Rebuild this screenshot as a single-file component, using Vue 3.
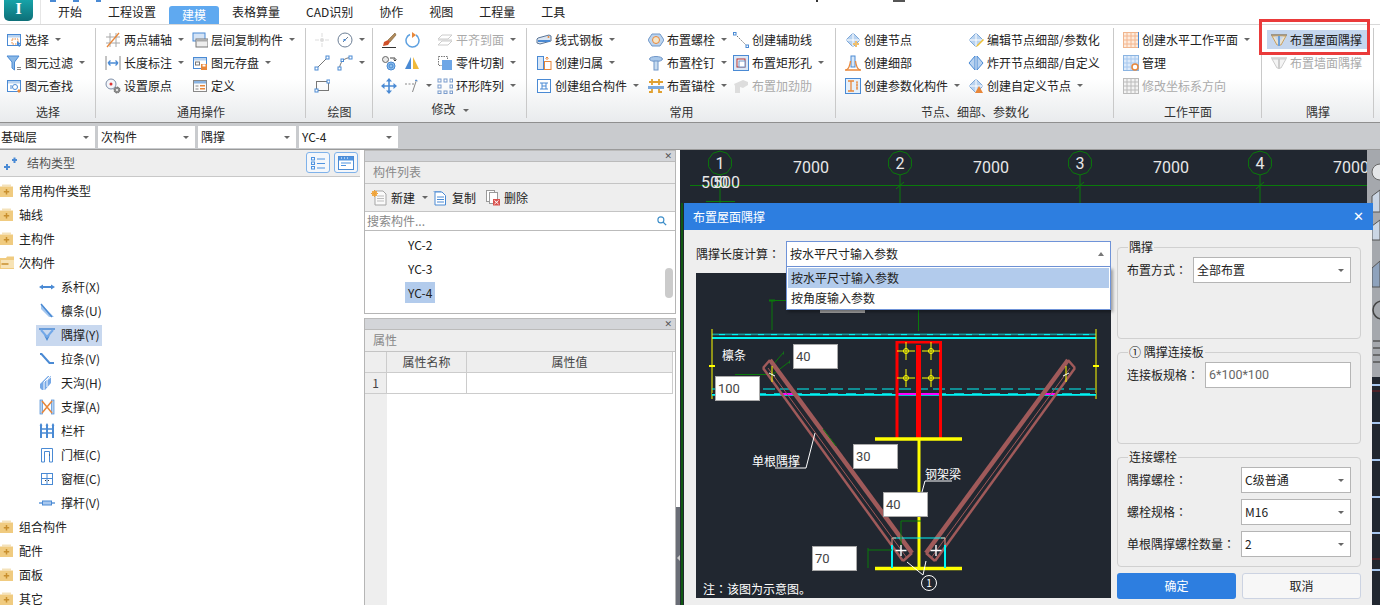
<script setup>
const B = '#4a8ad4', L = '#b9d3f0', O = '#e8873a', G = '#9a9a9a'
const win = (extra = '') => `<rect x="1.5" y="2.5" width="13" height="11" fill="#fff" stroke="${B}"/><rect x="2" y="3" width="12" height="2.5" fill="${L}"/>${extra}`
const diamond = (extra = '') => `<path d="M8 1 15 8 8 15 1 8Z" fill="${L}" stroke="#7ea8d8"/><path d="M8 1V15M1 8H15" stroke="#fff"/>${extra}`
const icons = {
  sel: win(`<rect x="6" y="7" width="6" height="5" fill="none" stroke="${O}" stroke-dasharray="1.5 1"/><path d="M11 9l4 3-2 .5 1 2-1 .5-1-2-1 1z" fill="${B}"/>`),
  filter: `<path d="M1 1H13L8.5 7V15L6 13V7Z" fill="#8ab8e6" stroke="${B}"/><path d="M11 12.5h4M11 14.5h4" stroke="#888"/>`,
  find: win(`<circle cx="9" cy="9" r="2.5" fill="none" stroke="${B}"/><path d="M4 8h2M4 10h2" stroke="${B}"/><path d="M13 11l2 2-2 2-2-2z" fill="${O}"/>`),
  axis: `<path d="M1 5H15M1 11H15M5 1V15M11 1V15" stroke="#a8a8a8"/><path d="M2 15 14 1" stroke="${O}" stroke-width="1.3"/>`,
  dim: `<path d="M1 1V15M15 1V15" stroke="#888"/><path d="M3 8H13M3 8l2.500-2.500M3 8l2.500 2.500M13 8l-2.500-2.500M13 8l-2.500 2.500" stroke="${B}" stroke-width="1.3" fill="none"/>`,
  origin: `<circle cx="6" cy="6" r="5" fill="#f4f6fa" stroke="#7d8ea8"/><circle cx="6" cy="6" r="1.500" fill="#d33"/><circle cx="12" cy="12" r="3" fill="#8c8c8c" stroke="#666" stroke-dasharray="1.500 .8"/><circle cx="12" cy="12" r="1" fill="#fff"/>`,
  layercopy: `<rect x="1" y="1" width="12" height="8" fill="#d5e4f6" stroke="${B}"/><rect x="4" y="7" width="12" height="8" fill="#eee" stroke="#777"/><rect x="4.500" y="7.500" width="11" height="2" fill="#aaa"/>`,
  store: win(`<rect x="3.500" y="7" width="4" height="3" fill="none" stroke="#777"/><rect x="9" y="9" width="6" height="6" fill="${O}"/><rect x="10.500" y="9.500" width="3" height="2" fill="#fff"/>`),
  define: `<rect x="1.500" y="2.500" width="13" height="11" fill="#fbfbfb" stroke="#888"/><rect x="2" y="3" width="12" height="2.500" fill="#8ab4e2"/><path d="M3.500 8h3M3.500 11h3" stroke="#888"/><rect x="8" y="7" width="5" height="1.500" fill="${O}"/><rect x="8" y="10" width="5" height="1.500" fill="${O}"/>`,
  pt: `<circle cx="8" cy="8" r="2" fill="#ddd"/><path d="M1 8H5M11 8H15M8 1V5M8 11V15" stroke="#ddd"/>`,
  circ: `<circle cx="8" cy="8" r="7" fill="none" stroke="#6d7f96"/><path d="M6 10 11 5" stroke="#6d7f96"/><rect x="6.500" y="7" width="2" height="2" fill="${B}"/>`,
  line: `<path d="M2.500 13.500 13.500 2.500" stroke="#777"/><rect x="1" y="12" width="3" height="3" fill="#fff" stroke="${B}"/><rect x="12" y="1" width="3" height="3" fill="#fff" stroke="${B}"/>`,
  arc: `<path d="M2.500 13.500C3 7 7 3 13.500 2.500" stroke="#777" fill="none"/><rect x="1" y="12" width="3" height="3" fill="#fff" stroke="${B}"/><rect x="12" y="1" width="3" height="3" fill="#fff" stroke="${B}"/><rect x="4" y="4" width="2.500" height="2.500" fill="#fff" stroke="${B}"/>`,
  rect: `<rect x="2.500" y="3.500" width="12" height="9" fill="none" stroke="#777"/><rect x="1" y="11" width="3" height="3" fill="#fff" stroke="${B}"/><rect x="13" y="2" width="3" height="3" fill="#fff" stroke="${B}"/>`,
  brush: `<path d="M14 1 7 8l2 2 6-7z" fill="#b08a5a" stroke="#7a5a30" stroke-width=".6"/><path d="M7 8 3 10l-1 4 5-1 2-3z" fill="#d0512a"/><path d="M1 15.500H15" stroke="#333"/>`,
  rotate: `<path d="M6 2.500A6.500 6.500 0 1 0 12 3" fill="none" stroke="#5da0e0" stroke-width="1.500"/><path d="M8 0l4 3-4 3z" fill="${O}"/>`,
  mcopy: `<circle cx="4.500" cy="4.500" r="3" fill="#e8e8e8" stroke="#666"/><circle cx="10" cy="11" r="4" fill="#8fc0ec" stroke="${B}"/><circle cx="10" cy="11" r="2" fill="none" stroke="${B}"/><path d="M9 3h5v3M12.500 4.500 14 6l1.500-1.500" stroke="#444" fill="none"/>`,
  mirror: `<path d="M7 2V14H1Z" fill="${B}"/><path d="M9 2V14H15Z" fill="#f0b93a"/>`,
  move: `<path d="M8 1V15M1 8H15" stroke="${B}" stroke-width="1.600"/><path d="M8 0l3 3.500H5zM8 16l3-3.500H5zM0 8l3.500 3V5zM16 8l-3.500 3V5z" fill="${B}"/>`,
  extend: `<path d="M1 6h2M4.500 6h2M8 6h2M12.500 2 8.500 14" stroke="#888"/><path d="M11 2.500 12.500 2l.8 1.300" stroke="${B}" fill="none"/>`,
  align: `<path d="M5 3H15L11 7H1ZM5 9H15L11 13H1Z" fill="none" stroke="#ccc"/><path d="M1 8H15" stroke="#ccc"/>`,
  cut: `<rect x="1.500" y="1.500" width="9" height="9" fill="none" stroke="#777" stroke-dasharray="1.500 1"/><rect x="5" y="5" width="10" height="10" fill="#6ea6e6"/>`,
  array: `<g fill="none" stroke="#7a9ccc"><rect x="1" y="1" width="3" height="3"/><rect x="7" y="1" width="3" height="3"/><rect x="13" y="1" width="2.500" height="3"/><rect x="1" y="7" width="3" height="3"/><rect x="13" y="7" width="2.500" height="3"/><rect x="1" y="13" width="3" height="2.500"/><rect x="7" y="13" width="3" height="2.500"/><rect x="13" y="13" width="2.500" height="2.500"/></g>`,
  plate: `<path d="M2 6 13 3l2 1v5L4 12 1 11V7Z" fill="#dbe6f3" stroke="#5b7596"/><rect x="2" y="8" width="12" height="2" fill="${B}"/><circle cx="12.500" cy="5" r="1" fill="${O}"/>`,
  tail: `<rect x="1.500" y="1.500" width="6" height="13" fill="#d8e7f8" stroke="${B}"/><rect x="8.500" y="6.500" width="6.500" height="8" fill="#fff" stroke="${O}"/><path d="M11 5V2M9.500 3.500 11 2l1.500 1.500" stroke="${O}" fill="none"/>`,
  combo: `<rect x="1.500" y="1.500" width="13" height="13" fill="#fff" stroke="${B}"/><path d="M4 5h8M4 11h8M6 5v6M10 5v6M6 8h4" stroke="${B}"/>`,
  bolt: `<path d="M4 2h8l4 6-4 6H4L0 8Z" fill="#bcd4ee" stroke="#6f96c8"/><circle cx="8" cy="8" r="3.500" fill="#f5e5c8" stroke="${O}"/>`,
  stud: `<ellipse cx="8" cy="4" rx="6.500" ry="2.500" fill="#a9c8ea" stroke="#6f96c8"/><rect x="6" y="6" width="4" height="9" fill="#c8dcf0" stroke="#6f96c8"/>`,
  anchor: `<path d="M4 1V7M11 1V7M1 4H15" stroke="#e0a030" stroke-width="1.800" fill="none"/><path d="M0 8H16V11H0Z" fill="#7aa8dc"/><path d="M4 11v3h-3M11 11v3h3" stroke="#e0a030" stroke-width="1.800" fill="none"/>`,
  aux: `<path d="M2 2 14 14" stroke="#666" stroke-dasharray="1.500 1.500"/><rect x="0.500" y="0.500" width="2.500" height="2.500" fill="#fff" stroke="${B}"/><rect x="13" y="13" width="2.500" height="2.500" fill="#fff" stroke="${B}"/>`,
  hole: `<rect x=".5" y=".5" width="15" height="15" fill="#dce8f6" stroke="${B}"/><rect x="4" y="4" width="8" height="8" fill="#fff" stroke="#b03030"/><rect x="6" y="6" width="6" height="6" fill="#fff" stroke="#6f96c8"/>`,
  stiff: `<path d="M1 6 10 2l5 2v3l-5 3-3-1v6H2V8Z" fill="#ddd"/>`,
  node: diamond(`<path d="M11 9v6M8 12h6" stroke="#f0c070" stroke-width="2"/>`),
  detail: `<rect x="6" y="1" width="4" height="11" fill="#d7e7f8" stroke="${B}"/><path d="M1 15C4 14 5 10 5.500 6M15 15C12 14 11 10 10.500 6" stroke="${O}" fill="none" stroke-width="1.300"/><path d="M0 15H16" stroke="${O}" stroke-width="1.500"/>`,
  param: `<rect x=".5" y=".5" width="15" height="15" fill="#e5f0fb" stroke="${B}"/><path d="M3 3h6M3 13h6M6 3v10" stroke="${O}" stroke-width="1.300"/><path d="M11 4h2M11 7h2M11 10h2M12 4v8" stroke="${O}"/>`,
  nedit: diamond(`<path d="M15 7 9 13l-1 2 2-1 6-6z" fill="#f0c030"/>`),
  nexp: `<path d="M7 1V15L1 8ZM9 1V15L15 8Z" fill="${L}" stroke="${B}"/>`,
  ncus: diamond(`<path d="M11 8l4 7H7z" fill="${O}"/>`),
  plane: `<rect x=".5" y=".5" width="15" height="15" fill="#fdebdc" stroke="#f0b68e"/><path d="M4 1V15M8 1V15M12 1V15M1 4H15M1 8H15M1 12H15" stroke="#f4b690"/><path d="M15.500 0V16" stroke="${B}"/>`,
  manage: `<rect x=".5" y=".5" width="15" height="15" fill="#dceafa" stroke="#8ab4e2"/><path d="M4 1V15M8 1V15M12 1V15M1 4H15M1 8H15M1 12H15" stroke="#a8c8ee"/><circle cx="12" cy="12" r="3" fill="#fff" stroke="${O}" stroke-width="1.500"/>`,
  coord: `<rect x=".5" y=".5" width="15" height="15" fill="#f3f3f3" stroke="#bbb"/><path d="M4 1V15M8 1V15M12 1V15M1 4H15M1 8H15M1 12H15" stroke="#bbb"/>`,
  brace: `<path d="M0 3H16" stroke="#8a7a60" stroke-width="1.400"/><path d="M1 4 6 13H10L15 4Z" fill="#e8e2d2" stroke="#c9a060"/><path d="M3.500 4.500H12.500L9 9H7Z" fill="#c5d6ee"/><rect x="7" y="4" width="2" height="10" fill="#6ea0d8"/>`,
  wbrace: `<path d="M0 3H16" stroke="#ccc" stroke-width="1.400"/><path d="M1 4 6 13H10L15 4Z" fill="#f4f4f4" stroke="#ccc"/><rect x="7" y="4" width="2" height="10" fill="#ccc"/>`,
  fplus: `<path d="M2 1.500h9v2H2z" fill="#f4e2bb"/><path d="M0 3.500H13V14H0Z" fill="#f0cb80"/><path d="M6.500 6v5.500M3.800 8.700h5.400" stroke="#c88f2e" stroke-width="1.500"/>`,
  fminus: `<path d="M0 3H6L7 1.500H14V14H0Z" fill="#f0cb80"/><path d="M1 5H14V13H1Z" fill="#f7e3b6"/><path d="M1.500 9h7" stroke="#c88f2e" stroke-width="1.500"/>`,
  tie: `<path d="M3 8H13" stroke="${B}" stroke-width="2"/><path d="M0 8l4-2.500v5zM16 8l-4-2.500v5z" fill="${B}"/>`,
  purlin: `<path d="M2 1 15 14H10L2 6Z" fill="#a3c6ee"/><path d="M2 1 13 14" stroke="${B}" stroke-width="1.500"/>`,
  ybrace: `<path d="M0 2H16" stroke="${B}" stroke-width="1.500"/><path d="M2 3 8 10 14 3" stroke="#72a8e8" stroke-width="2" fill="none"/><path d="M5 8 8 11 11 8 8 14Z" fill="${B}"/>`,
  strip: `<path d="M1 2h2l8 9h4v2H10L2 4H1Z" fill="${B}"/>`,
  gutter: `<path d="M1 9 9 1h3v7l-6 7H3L1 13Z" fill="#76a8e6"/><path d="M5 15V7l6-6M8 12V5l5-4v7" stroke="#fff" fill="none"/>`,
  xbrace: `<rect x="1" y="1" width="2.500" height="14" fill="${L}" stroke="${B}" stroke-width=".7"/><rect x="12.500" y="1" width="2.500" height="14" fill="${L}" stroke="${B}" stroke-width=".7"/><path d="M3 2 13 14M13 2 3 14" stroke="${O}" stroke-width="1.500"/>`,
  rail: `<path d="M2 2V15M8 2V15M14 2V15" stroke="${B}" stroke-width="2"/><path d="M1 6H15M1 10H15" stroke="${B}" stroke-width="1.300"/><path d="M2 0l1.500 2.500h-3zM8 0l1.500 2.500h-3zM14 0l1.500 2.500h-3z" fill="${B}"/>`,
  door: `<path d="M2.500 15V1.500H13.500V15H10.500V4.500H5.500V15Z" fill="#fff" stroke="${B}"/><path d="M10 8h1" stroke="#444"/>`,
  window: `<rect x="2.500" y="2.500" width="11" height="11" fill="#fff" stroke="${B}"/><path d="M8 2.500V13.500M2.500 7.500H13.500" stroke="${B}"/><path d="M6.500 9v1M9.500 9v1" stroke="#333"/>`,
  strut: `<path d="M0 8H16" stroke="${B}" stroke-width="1.300"/><rect x="3.500" y="6" width="9" height="4" fill="#a9c8ee" stroke="${B}"/>`,
  stars: `<path d="M2 12H8M5 9V15M10 5H15M12.500 2.500V8" stroke="${B}" stroke-width="2"/>`,
  listb: `<g fill="none" stroke="#4f93e0"><rect x="1.500" y="2.500" width="3" height="2.500"/><rect x="1.500" y="7" width="3" height="2.500"/><rect x="1.500" y="11.500" width="3" height="2.500"/><path d="M7 4H15M7 8.500H15M7 13H15"/></g>`,
  winb: `<rect x=".5" y="1.500" width="15" height="13" fill="#fff" stroke="${B}"/><rect x="1" y="2" width="14" height="3.500" fill="#4f93e0"/><path d="M3 3h1M6 3h1M9 3h1" stroke="#fff"/><path d="M3 8h10M3 10.500h5" stroke="#4f93e0" stroke-width="1.200"/>`,
  newd: `<path d="M4 1H12L15 4V15H4Z" fill="#fafafa" stroke="#a5a5a5"/><path d="M6 6h7M6 8.500h7M6 11h7" stroke="#bdbdbd"/><rect x="1" y="1" width="5" height="5" fill="#f0a030" opacity=".85"/><path d="M3.500 0V7M0 3.500H7" stroke="#f0a030" stroke-dasharray="1 1"/>`,
  copyd: `<path d="M1.500 1.500H9" stroke="#8ab0de" fill="none"/><path d="M3 2H10L13.500 5.500V15H3Z" fill="#fff" stroke="${B}"/><path d="M5 7h7M5 9.500h7M5 12h7" stroke="${B}"/>`,
  deld: `<rect x="1.500" y=".5" width="8" height="11" fill="#fff" stroke="#9a9a9a"/><rect x="4.500" y="2.500" width="8" height="11" fill="#fff" stroke="#9a9a9a"/><rect x="8" y="9" width="7" height="6.500" fill="#d9534f"/><path d="M9.500 10.500l4 3.500M13.500 10.500l-4 3.500" stroke="#fff"/>`,
  search: `<circle cx="6.500" cy="6.500" r="4" fill="none" stroke="#3d8ec9" stroke-width="1.500"/><path d="M9.500 9.500l4 4" stroke="#3d8ec9" stroke-width="1.800"/>`
}

const bits = [[50, 6, '#4a8ad4'], [73, 6, '#4a8ad4'], [96, 5, '#4a8ad4'], [816, 2, '#333'], [893, 12, '#555']]
const tabs = ['开始', '工程设置', '建模', '表格算量', 'CAD识别', '协作', '视图', '工程量', '工具']

const groups = [
  { name: '选择', w: 96, pad: 6, cols: [{ items: [
    { ic: 'sel', t: '选择', c: 1 }, { ic: 'filter', t: '图元过滤', c: 1 }, { ic: 'find', t: '图元查找' }] }] },
  { name: '通用操作', w: 210, pad: 9, cols: [
    { w: 87, items: [{ ic: 'axis', t: '两点辅轴', c: 1 }, { ic: 'dim', t: '长度标注', c: 1 }, { ic: 'origin', t: '设置原点' }] },
    { items: [{ ic: 'layercopy', t: '层间复制构件', c: 1 }, { ic: 'store', t: '图元存盘', c: 1 }, { ic: 'define', t: '定义' }] }] },
  { name: '绘图', w: 67, pad: 8, cols: [
    { w: 23, items: [{ ic: 'pt' }, { ic: 'line' }, { ic: 'rect' }] },
    { items: [{ ic: 'circ', c: 1 }, { ic: 'arc', c: 1 }] }] },
  { name: '修改', w: 154, pad: 8, nameCaret: 1, cols: [
    { w: 23, items: [{ ic: 'brush' }, { ic: 'mcopy' }, { ic: 'move' }] },
    { w: 33, items: [{ ic: 'rotate' }, { ic: 'mirror' }, { ic: 'extend', c: 1 }] },
    { items: [{ ic: 'align', t: '平齐到面', c: 1, off: 1 }, { ic: 'cut', t: '零件切割', c: 1 }, { ic: 'array', t: '环形阵列', c: 1 }] }] },
  { name: '常用', w: 309, pad: 9, cols: [
    { w: 112, items: [{ ic: 'plate', t: '线式钢板', c: 1 }, { ic: 'tail', t: '创建归属', c: 1 }, { ic: 'combo', t: '创建组合构件', c: 1 }] },
    { w: 85, items: [{ ic: 'bolt', t: '布置螺栓', c: 1 }, { ic: 'stud', t: '布置栓钉', c: 1 }, { ic: 'anchor', t: '布置锚栓', c: 1 }] },
    { items: [{ ic: 'aux', t: '创建辅助线' }, { ic: 'hole', t: '布置矩形孔', c: 1 }, { ic: 'stiff', t: '布置加劲肋', off: 1 }] }] },
  { name: '节点、细部、参数化', w: 278, pad: 9, cols: [
    { w: 123, items: [{ ic: 'node', t: '创建节点' }, { ic: 'detail', t: '创建细部' }, { ic: 'param', t: '创建参数化构件', c: 1 }] },
    { items: [{ ic: 'nedit', t: '编辑节点细部/参数化' }, { ic: 'nexp', t: '炸开节点细部/自定义' }, { ic: 'ncus', t: '创建自定义节点', c: 1 }] }] },
  { name: '工作平面', w: 148, pad: 9, cols: [{ items: [
    { ic: 'plane', t: '创建水平工作平面', c: 1 }, { ic: 'manage', t: '管理' }, { ic: 'coord', t: '修改坐标系方向', off: 1 }] }] },
  { name: '隅撑', w: 112, pad: 5, cols: [{ items: [
    { ic: 'brace', t: '布置屋面隅撑', hi: 1 }, { ic: 'wbrace', t: '布置墙面隅撑', off: 1, ind: 1 }] }] }
]

const combos = [
  { t: '基础层', w: 95 }, { t: '次构件', w: 97 }, { t: '隅撑', w: 98 }, { t: 'YC-4', w: 99 }
]

const tree = [
  { t: '常用构件类型', ic: 'fplus' }, { t: '轴线', ic: 'fplus' }, { t: '主构件', ic: 'fplus' }, { t: '次构件', ic: 'fminus' },
  { t: '系杆(X)', ic: 'tie', sub: 1 }, { t: '檩条(U)', ic: 'purlin', sub: 1 }, { t: '隅撑(Y)', ic: 'ybrace', sub: 1, on: 1 },
  { t: '拉条(V)', ic: 'strip', sub: 1 }, { t: '天沟(H)', ic: 'gutter', sub: 1 }, { t: '支撑(A)', ic: 'xbrace', sub: 1 },
  { t: '栏杆', ic: 'rail', sub: 1 }, { t: '门框(C)', ic: 'door', sub: 1 }, { t: '窗框(C)', ic: 'window', sub: 1 }, { t: '撑杆(V)', ic: 'strut', sub: 1 },
  { t: '组合构件', ic: 'fplus' }, { t: '配件', ic: 'fplus' }, { t: '面板', ic: 'fplus' }, { t: '其它', ic: 'fplus' }
]

const axes = [{ x: 720, n: 1 }, { x: 900, n: 2 }, { x: 1080, n: 3 }, { x: 1260, n: 4 }]
const spans = [811, 991, 1171, 1351]
const railTicks = [235, 273, 310, 347, 383, 420]
const octagon = (x, y, r) => {
  const pts = []
  for (let i = 0; i < 10; i++) {
    const a = (Math.PI * 2 * i) / 10 + Math.PI / 10
    pts.push(`${(x + r * Math.cos(a)).toFixed(1)},${(y + r * Math.sin(a)).toFixed(1)}`)
  }
  return pts.join(' ')
}
const boltPts = [[906, 351], [931, 351], [906, 378], [931, 378]]
const inputs = [
  { t: '40', x: 97, y: 71 }, { t: '100', x: 19, y: 103 }, { t: '30', x: 157, y: 171 }, { t: '40', x: 187, y: 219 }, { t: '70', x: 116, y: 273 }
]
</script>

<template>
  <div class="app">
    <i v-for="b in bits" :key="b[0]" class="bit" :style="{ left: b[0] + 'px', width: b[1] + 'px', background: b[2] }"></i>

    <div class="tabs">
      <div class="logo-cell">
        <div class="logo"><span>I</span></div>
      </div>
      <div v-for="t in tabs" :key="t" class="tab" :class="{ active: t === '建模' }">{{ t }}</div>
    </div>

    <div class="ribbon">
      <div v-for="g in groups" :key="g.name" class="group" :style="{ width: g.w + 'px' }">
        <div class="g-body" :style="{ paddingLeft: g.pad + 'px' }">
          <div v-for="(c, ci) in g.cols" :key="ci" class="g-col" :style="c.w ? { width: c.w + 'px' } : null">
            <div v-for="(it, i) in c.items" :key="i" class="r-item" :class="{ off: it.off, hi: it.hi, ind: it.ind }">
              <svg class="ic" viewBox="0 0 16 16" v-html="icons[it.ic]"></svg>
              <span v-if="it.t" class="r-text">{{ it.t }}</span>
              <i v-if="it.c" class="caret"></i>
            </div>
          </div>
        </div>
        <div class="g-name" :class="{ raised: g.nameCaret }">{{ g.name }}<i v-if="g.nameCaret" class="caret"></i></div>
      </div>
    </div>
    <div class="mark"></div>

    <div class="combo-bar">
      <div v-for="c in combos" :key="c.t" class="combo" :style="{ width: c.w + 'px' }">
        <span>{{ c.t }}</span><i class="caret"></i>
      </div>
    </div>

    <div class="main">
      <aside class="left">
        <div class="left-head">
          <svg class="ic" viewBox="0 0 16 16" v-html="icons.stars"></svg>
          <span class="left-title">结构类型</span>
          <div class="hbtn active"><svg class="ic" viewBox="0 0 16 16" v-html="icons.listb"></svg></div>
          <div class="hbtn active"><svg class="ic" viewBox="0 0 16 16" v-html="icons.winb"></svg></div>
        </div>
        <div class="tree">
          <div v-for="n in tree" :key="n.t" class="t-row" :class="{ sub: n.sub }">
            <div class="t-in" :class="{ on: n.on }">
              <svg class="ic" :class="{ fold: !n.sub }" viewBox="0 0 16 16" v-html="icons[n.ic]"></svg>
              <span>{{ n.t }}</span>
            </div>
          </div>
        </div>
      </aside>
      <div class="sep"></div>

      <section class="mid">
        <div class="panel list-panel">
          <div class="p-bar">✕</div>
          <div class="p-title">构件列表</div>
          <div class="p-tools">
            <svg class="ic" viewBox="0 0 16 16" v-html="icons.newd"></svg><span class="tool-t">新建</span><i class="caret tool-c"></i>
            <svg class="ic" viewBox="0 0 16 16" v-html="icons.copyd"></svg><span class="tool-t">复制</span>
            <svg class="ic" viewBox="0 0 16 16" v-html="icons.deld"></svg><span class="tool-t tight">删除</span>
          </div>
          <div class="p-search"><span>搜索构件...</span><svg class="ic s" viewBox="0 0 16 16" v-html="icons.search"></svg></div>
          <div class="p-list">
            <div class="li"><span>YC-2</span></div>
            <div class="li"><span>YC-3</span></div>
            <div class="li"><span class="on">YC-4</span></div>
            <i class="thumb"></i>
          </div>
        </div>
        <div class="panel prop-panel">
          <div class="p-bar">✕</div>
          <div class="p-title">属性</div>
          <div class="grid-head"><span></span><span>属性名称</span><span>属性值</span></div>
          <div class="grid-row"><span>1</span><span></span><span></span></div>
          <div class="grid-rest"><i></i></div>
        </div>
      </section>

      <div class="strip"><div class="strip-top"></div><div class="strip-low"><i></i></div></div>

      <div class="canvas">
        <svg class="cad" viewBox="680 150 700 455" preserveAspectRatio="none">
          <path d="M682 203V605" stroke="#0a6a0a" stroke-width="1.500"/>
          <path d="M690 185.500H1367" stroke="#0a7a0a"/>
          <path d="M706 201.500H735" stroke="#0a7a0a"/>
          <g v-for="a in axes" :key="a.n">
            <polygon :points="octagon(a.x, 163, 12)" fill="none" stroke="#0a7a0a"/>
            <path :d="`M${a.x} 175V205M${a.x - 4} 189L${a.x + 4} 182`" stroke="#0a7a0a"/>
            <text :x="a.x" y="169" class="cad-t" text-anchor="middle">{{ a.n }}</text>
          </g>
          <text v-for="s in spans" :key="s" :x="s" y="172.500" class="cad-t" text-anchor="middle">7000</text>
          <text x="701" y="188" class="cad-t">500</text>
          <text x="713" y="188" class="cad-t">500</text>

          <rect x="1367" y="150" width="13" height="227" fill="#a5a8ad"/>
          <circle cx="1380" cy="172" r="8" fill="#e4e6e8" stroke="#666"/>
          <path d="M1372 196l8-6v22h-8zM1372 226l8-6v20h-8z" fill="#cbd6e4" stroke="#555"/>
          <path d="M1372 268l8-7v26h-8z" fill="#8ea2bc" stroke="#555"/>
          <circle cx="1382" cy="310" r="9" fill="none" stroke="#444" stroke-width="1.500"/>
          <path d="M1373 341H1380M1373 348H1380M1373 355H1380M1373 362H1380" stroke="#555" stroke-width="1.500"/>
          <path v-for="y in railTicks" :key="y" :d="`M1372 ${y + 150}H1380`" stroke="#a8c8f0" stroke-width="2"/>
          <path d="M1372 391H1380M1372 559H1380" stroke="#7a1f1f"/>
        </svg>
      </div>

      <div class="dialog">
        <div class="d-title"><span>布置屋面隅撑</span><b>✕</b></div>
        <div class="d-body">
          <div class="d-left">
            <div class="calc-row">
              <span class="calc-label">隅撑长度计算<span class="co">：</span></span>
              <div class="calc-select"><span>按水平尺寸输入参数</span><i class="caret up"></i></div>
              <div class="drop">
                <div class="opt sel">按水平尺寸输入参数</div>
                <div class="opt">按角度输入参数</div>
              </div>
            </div>
            <div class="figure">
              <svg class="fig" viewBox="696 273 415 325">
                <rect x="820" y="309" width="45" height="4" fill="#a0a0a0"/>
                <path d="M772 301V330M772 300.500H822M918.500 308V331" stroke="#0a7a0a"/>
                <path d="M769 300.500H775" stroke="#0a7a0a" stroke-width="2"/>
                <path d="M712 334.500H1096" stroke="#00f5f5" stroke-width="1.700"/>
                <path d="M712 335H1096" stroke="#212730" stroke-width=".9" stroke-dasharray="7 6"/>
                <path d="M712 338H1096" stroke="#00f5f5" stroke-width="2"/>
                <path d="M712 329V399M1096 329V399" stroke="#ffff00"/>
                <path d="M709 366H715M1093 366H1099" stroke="#ffff00" stroke-width="2"/>
                <path d="M712 389H1095" stroke="#00f5f5" stroke-dasharray="12 5"/>
                <path d="M712 394.500H1096" stroke="#00f5f5" stroke-width="2.500"/>
                <path d="M712 393.500H1096" stroke="#212730" stroke-dasharray="8 10"/>
                <path d="M780 394H793M897 394H940M1043 394H1055" stroke="#ff00ff" stroke-width="2"/>
                <path d="M735 374.500H772M783 353 772 366M789 362 772 375" stroke="#0a7a0a"/>
                <path d="M783 353h.5M789 362h.5" stroke="#11aa11" stroke-width="3"/>

                <rect x="896.500" y="341" width="44" height="2.500" fill="#ff0000"/>
                <path d="M897 341V438M940.500 341V438" stroke="#ff0000" stroke-width="3"/>
                <path d="M918.500 345V438" stroke="#ff0000" stroke-width="5"/>
                <g v-for="p in boltPts" :key="p[0] + '-' + p[1]">
                  <path :d="`M${p[0] - 9} ${p[1]}H${p[0] + 9}M${p[0]} ${p[1] - 9}V${p[1] + 9}`" stroke="#ffff00"/>
                  <circle :cx="p[0]" :cy="p[1]" r="2.500" fill="none" stroke="#ffff00"/>
                </g>

                <path d="M875 439H962M875 568.500H962" stroke="#ffff00" stroke-width="3.500"/>
                <path d="M919 439V568" stroke="#ffff00" stroke-width="3"/>

                <g v-for="flip in [0, 1]" :key="flip" :transform="flip ? 'translate(1838,0) scale(-1,1)' : null">
                  <path d="M770 360 912 553" stroke="#a05a5a" stroke-width="4.500"/>
                  <path d="M763 368 903 561" stroke="#a05a5a" stroke-width="2.500"/>
                  <path d="M770 360 763 368M912 553 903 561" stroke="#a05a5a" stroke-width="2.500"/>
                  <path d="M768 368 907 558" stroke="#a05a5a"/>
                  <path d="M772 366V382" stroke="#ffff00"/>
                  <path d="M775 376 769 373" stroke="#fff"/>
                </g>

                <path d="M892 545V568M945 545V568" stroke="#00f5f5" stroke-width="2"/>
                <path d="M893 538H945" stroke="#00f5f5"/>
                <path d="M892 545V538H896M945 545V538H941" stroke="#f0a090" fill="none"/>
                <path d="M901 521H921M901 521V545M868 548V568M868 550H892M823 429 836 446" stroke="#0a7a0a"/>
                <path d="M895.500 550.500H906.500M901 545V556M930.500 550.500H941.500M936 545V556" stroke="#fff" stroke-width="1.400"/>

                <path d="M775 468H806L815 433M925 481H952M925 481 922 492M907 562 923 575M926 561 923 575" stroke="#fff" fill="none"/>
                <circle cx="929" cy="583" r="7.500" fill="#212730" stroke="#fff"/>
                <text x="929" y="587" class="f-t f-c" text-anchor="middle">1</text>
                <text x="722" y="360" class="f-t">檩条</text>
                <text x="752" y="466" class="f-t">单根隅撑</text>
                <text x="925" y="479" class="f-t">钢架梁</text>
                <text x="703" y="594" class="f-t">注<tspan class="co-s">：</tspan>该图为示意图。</text>
              </svg>
              <div v-for="b in inputs" :key="b.x" class="f-box" :style="{ left: b.x + 'px', top: b.y + 'px' }">{{ b.t }}</div>
            </div>
          </div>

          <div class="d-right">
            <div class="fs h92">
              <span class="legend">隅撑</span>
              <div class="f-row"><label>布置方式<span class="co">：</span></label><div class="sel-box w158"><span>全部布置</span><i class="caret"></i></div></div>
            </div>
            <div class="fs h92">
              <span class="legend">① 隅撑连接板</span>
              <div class="f-row"><label>连接板规格<span class="co">：</span></label><div class="sel-box w146"><span class="val">6*100*100</span></div></div>
            </div>
            <div class="fs h110">
              <span class="legend">连接螺栓</span>
              <div class="f-row"><label>隅撑螺栓<span class="co">：</span></label><div class="sel-box w110"><span>C级普通</span><i class="caret"></i></div></div>
              <div class="f-row"><label>螺栓规格<span class="co">：</span></label><div class="sel-box w110"><span>M16</span><i class="caret"></i></div></div>
              <div class="f-row"><label>单根隅撑螺栓数量<span class="co">：</span></label><div class="sel-box w110"><span>2</span><i class="caret"></i></div></div>
            </div>
            <div class="btns">
              <div class="btn ok">确定</div>
              <div class="btn cancel">取消</div>
            </div>
          </div>
        </div>
      </div>
    </div>
  </div>
</template>

<style>
html, body { margin: 0; padding: 0; overflow: hidden; background: #fff; }
</style>

<style scoped>
.app {
  position: relative;
  width: 1380px;
  height: 605px;
  overflow: hidden;
  display: flex;
  flex-direction: column;
  font: 12px/16px "Noto Sans CJK SC", "Noto Sans", sans-serif;
  color: #222;
  background: #fff;
}
.bit { position: absolute; top: 0; height: 2px; }
.ic { width: 16px; height: 16px; flex: none; display: block; }
.co { font-family: "Noto Sans CJK TC", sans-serif; }
.co-s { font-family: "Noto Sans CJK TC", sans-serif; }
.caret {
  display: inline-block;
  width: 0; height: 0;
  border-left: 3px solid transparent;
  border-right: 3px solid transparent;
  border-top: 3px solid #666;
  flex: none;
}
.caret.up { border-top: 0; border-bottom: 4px solid #777; }

.tabs { height: 24px; display: flex; flex: none; }
.logo-cell { width: 40px; height: 24px; border-right: 1px solid #e6e6e6; margin-right: 4px; box-sizing: content-box; flex: none; }
.logo {
  margin-left: 4px; width: 29px; height: 21px;
  background: linear-gradient(#17a3a8, #0e6f78);
  border-radius: 0 0 5px 5px;
  color: #fff; text-align: center;
  font: bold 17px/18px "Liberation Serif", serif;
}
.tab { padding: 0 13px; height: 24px; line-height: 23px; flex: none; }
.tab.active {
  background: #5fa9f0; color: #fff;
  border-radius: 3px 3px 0 0;
  height: 19px; margin-top: 6px; line-height: 18px;
}

.ribbon {
  flex: none;
  height: 97px;
  display: flex;
  border-top: 1px solid #d8d8d8;
  border-bottom: 1px solid #8f8f8f;
  background: linear-gradient(#fff 0, #fff 55%, #e9ebed 100%);
}
.group {
  flex: none;
  display: flex;
  flex-direction: column;
  box-sizing: border-box;
  padding-top: 3px;
  background: linear-gradient(#c9c9c9, #c9c9c9) right 3px / 1px 90px no-repeat;
}
.g-body { display: flex; height: 69px; }
.g-col { display: flex; flex-direction: column; flex: none; }
.r-item { display: flex; align-items: center; height: 23px; flex: none; }
.r-text { margin-left: 3px; white-space: nowrap; }
.r-item .caret { margin-left: 6px; }
.r-item.off { color: #aaa; }
.r-item.hi {
  background: #c5d6ee;
  height: 19px; margin: 2px 0 2px;
  padding: 0 5px 0 4px;
}
.r-item.ind { padding-left: 4px; }
.g-name { margin-top: 7px; text-align: center; color: #333; line-height: 16px; }
.g-name.raised { margin-top: 4px; }
.g-name .caret { margin-left: 7px; vertical-align: 2px; }
.mark {
  position: absolute; left: 1259px; top: 19px;
  width: 111px; height: 36px; box-sizing: border-box;
  border: 3px solid #ea3a3a;
  pointer-events: none;
}

.combo-bar {
  flex: none;
  height: 27px;
  box-sizing: border-box;
  background: #c9cbce;
  border-bottom: 1px solid #9a9a9a;
  display: flex;
  gap: 3px;
  padding-top: 3px;
}
.combo {
  height: 22px;
  box-sizing: border-box;
  background: #fff;
  display: flex; align-items: center; justify-content: space-between;
  padding: 0 6px 0 3px;
}
.combo:first-child { padding-left: 1px; }

.main { position: relative; flex: 1; min-height: 0; display: flex; }

.left { width: 360px; flex: none; display: flex; flex-direction: column; background: #fff; overflow: hidden; }
.left-head {
  flex: none;
  height: 27px; box-sizing: border-box;
  background: #eee;
  border-bottom: 1px solid #c8c8c8;
  display: flex; align-items: center;
  padding: 0 2px 1px 2px;
  gap: 4px;
}
.left-title { margin-left: 5px; margin-right: auto; color: #555; }
.hbtn {
  width: 24px; height: 21px; box-sizing: border-box;
  border: 1px solid #7fb2ea; border-radius: 3px;
  display: flex; align-items: center; justify-content: center;
  background: #f4f7fb;
}
.tree { padding-top: 2px; }
.t-row { height: 24px; display: flex; align-items: center; }
.t-row.sub { padding-left: 36px; }
.t-in { display: flex; align-items: center; height: 21px; }
.t-in .fold { margin-right: 3px; }
.t-row.sub .t-in { padding: 0 3px; }
.t-row.sub .ic { margin-right: 6px; }
.t-in.on { background: #c8d8ef; }

.sep { width: 4px; flex: none; background: #fff; }

.mid { width: 312px; flex: none; display: flex; flex-direction: column; gap: 4px; background: #fff; }
.panel { box-sizing: border-box; border: 1px solid #b5b5b5; border-top: 0; display: flex; flex-direction: column; }
.list-panel { height: 164px; flex: none; }
.prop-panel { flex: 1; min-height: 0; border-bottom: 0; }
.p-bar {
  flex: none;
  height: 12px; background: #d3d5d9;
  border-bottom: 1px solid #bbb;
  border-top: 1px solid #bbb;
  box-sizing: border-box;
  font: 9px/10px "DejaVu Sans", sans-serif;
  color: #555; text-align: right; padding-right: 3px;
}
.p-title {
  flex: none;
  height: 22px; box-sizing: border-box; line-height: 20px;
  background: #eee; color: #888; padding-left: 8px;
  border-bottom: 1px solid #c4c4c4;
}
.p-tools {
  flex: none;
  height: 28px; box-sizing: border-box;
  background: #eee; border-bottom: 1px solid #c4c4c4;
  display: flex; align-items: center; padding-left: 6px;
}
.tool-t { margin-left: 4px; margin-right: 9px; }
.tool-t.tight { margin-left: 3px; }
.tool-c { margin-left: -2px; margin-right: 4px; }
.p-search {
  flex: none;
  height: 19px; box-sizing: border-box; background: #fff;
  border-bottom: 1px solid #bbb;
  display: flex; align-items: center; justify-content: space-between;
  color: #888; padding: 0 7px 0 2px;
}
.ic.s { width: 12px; height: 12px; }
.p-list { position: relative; flex: 1; padding-top: 1px; background: #fff; }
.li { height: 24px; display: flex; align-items: center; padding-left: 40px; }
.li span { padding: 0 3px; height: 21px; line-height: 21px; }
.li span.on { background: #b2cbec; }
.thumb {
  position: absolute; right: 2px; top: 37px;
  width: 8px; height: 30px; border-radius: 4px; background: #cbcbcb;
}
.grid-head, .grid-row { flex: none; display: grid; grid-template-columns: 22px 80px 206px; }
.grid-head { height: 21px; }
.grid-row { height: 21px; }
.grid-head span, .grid-row span {
  box-sizing: border-box;
  border-right: 1px solid #ccc;
  border-bottom: 1px solid #ccc;
  text-align: center; line-height: 20px;
  background: #eee;
  color: #444;
}
.grid-row span:not(:first-child) { background: #fff; }
.grid-rest { flex: 1; }
.grid-rest i { display: block; width: 22px; height: 100%; background: #eee; }

.strip { width: 4px; flex: none; display: flex; flex-direction: column; }
.strip-top { height: 357px; background: #fff; }
.strip-low { flex: 1; background: #6a6e77; position: relative; }
.strip-low i {
  position: absolute; left: 1px; top: 48px; width: 0; height: 0;
  border-top: 3px solid transparent; border-bottom: 3px solid transparent; border-right: 3px solid #ccc;
}

.canvas { flex: 1; background: #212730; position: relative; min-width: 0; }
.cad { display: block; width: 100%; height: 100%; }
.cad-t { font: 16px "Roboto", "Liberation Sans", sans-serif; fill: #e8e8e8; }

.dialog {
  position: absolute;
  left: 684px; top: 53px;
  width: 688px; height: 402px;
  background: #eee;
  display: flex; flex-direction: column;
}
.d-title {
  flex: none; height: 27px;
  margin-right: -1px;
  background: #2d7ee0; color: #fff;
  display: flex; align-items: center; justify-content: space-between;
  padding: 0 9px;
}
.d-title b { font: bold 13px/14px "DejaVu Sans", sans-serif; }
.d-body { display: flex; gap: 6px; padding-left: 12px; }
.d-left { width: 415px; flex: none; padding-top: 11px; }
.calc-row { position: relative; display: flex; align-items: center; height: 26px; }
.calc-label { width: 90px; flex: none; }
.calc-select {
  flex: 1; height: 26px; box-sizing: border-box;
  background: #fff; border: 1px solid #6f93d8;
  display: flex; align-items: center; justify-content: space-between;
  padding: 0 6px 0 3px;
}
.drop {
  position: absolute; left: 90px; right: 0; top: 26px; z-index: 2;
  height: 43px; box-sizing: border-box;
  background: #fff; border: 1px solid #6f93d8; border-top: 0;
  padding: 1px;
  box-shadow: 2px 2px 3px rgba(0,0,0,.35);
}
.opt { height: 20px; line-height: 20px; padding-left: 3px; }
.opt.sel { background: #b2cbec; }
.figure { position: relative; margin-top: 6px; height: 325px; background: #212730; }
.fig { display: block; width: 415px; height: 325px; }
.f-t { font: 12px "Noto Sans CJK SC", sans-serif; fill: #fff; }
.f-c { font-size: 10px; }
.f-box {
  position: absolute; width: 45px; height: 25px; box-sizing: border-box;
  background: #fff; border: 1px solid #aaa;
  font: 13px/23px "Roboto", "Liberation Sans", sans-serif; color: #444; padding-left: 2px;
}

.d-right { width: 244px; flex: none; padding-top: 17px; display: flex; flex-direction: column; gap: 13px; }
.fs {
  position: relative; box-sizing: border-box;
  border: 1px solid #d0d0d0; border-radius: 4px;
  padding: 9px 9px 0;
  display: flex; flex-direction: column; gap: 6px;
}
.h92 { height: 92px; }
.h110 { height: 110px; }
.legend { position: absolute; left: 10px; top: -9px; background: #eee; padding: 0 1px; line-height: 16px; }
.f-row { display: flex; align-items: center; justify-content: space-between; height: 26px; }
.sel-box {
  height: 26px; box-sizing: border-box;
  background: #fff; border: 1px solid #b5b5b5;
  display: flex; align-items: center; justify-content: space-between;
  padding: 0 6px 0 3px;
}
.val { color: #666; font-family: "Roboto", sans-serif; font-size: 12.5px; }
.w158 { width: 158px; }
.w146 { width: 146px; }
.w110 { width: 110px; }
.btns { display: flex; justify-content: space-between; margin-top: -7px; }
.btn { width: 119px; height: 26px; line-height: 26px; box-sizing: border-box; text-align: center; border-radius: 3px; }
.ok { background: #2d7ee0; color: #fff; }
.cancel { background: #f7f7f7; border: 1px solid #ccd3e2; line-height: 24px; }
</style>
